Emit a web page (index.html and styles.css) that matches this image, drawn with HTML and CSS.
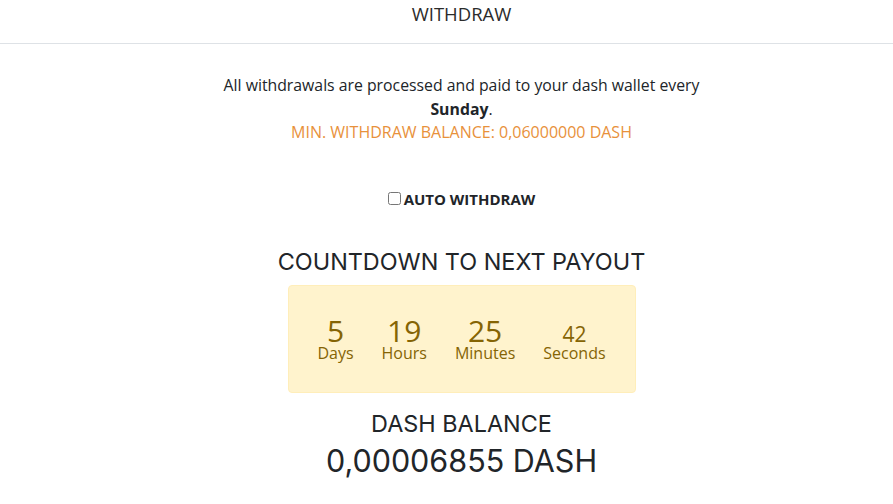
FILE: index.html
```html
<!DOCTYPE html>
<html lang="en">
<head>
<meta charset="UTF-8">
<meta name="viewport" content="width=device-width, initial-scale=1.0">
<title>Withdraw</title>
<link rel="stylesheet" href="styles.css">
</head>
<body>

<div class="cabecalho">
  <h4 class="titulo">WITHDRAW</h4>
</div>

<div id="conteudo">
  <p class="aviso">
    All withdrawals are processed and paid to your dash wallet every<br>
    <b>Sunday</b>.<br>
    <span class="minimo">MIN. WITHDRAW BALANCE: 0,06000000 DASH</span>
  </p>

  <label class="auto"><input type="checkbox" id="autoWithdraw"> AUTO WITHDRAW</label>

  <h3 class="subtitulo">COUNTDOWN TO NEXT PAYOUT</h3>

  <div class="contador">
    <div class="bloco"><span class="num">5</span><span class="rotulo">Days</span></div>
    <div class="bloco"><span class="num">19</span><span class="rotulo">Hours</span></div>
    <div class="bloco"><span class="num">25</span><span class="rotulo">Minutes</span></div>
    <div class="bloco"><span class="num pequeno">42</span><span class="rotulo">Seconds</span></div>
  </div>

  <h3 class="subtitulo saldo-titulo">DASH BALANCE</h3>
  <div class="saldo">0,00006855 DASH</div>
</div>

</body>
</html>
```

FILE: styles.css
```css
body {
  margin: 0;
  padding-left: 30px;
  background-color: white;
  font-family: "Open Sans", sans-serif;
  color: #212529;
}

.cabecalho {
  height: 43px;
  margin-left: -30px;
  padding-left: 30px;
  border-bottom: 1px solid #dee2e6;
  text-align: center;
}

.titulo {
  margin: 0;
  padding-top: 3px;
  font-size: 18.5px;
  font-weight: 400;
  line-height: 22px;
  color: #2b2b2b;
}

#conteudo {
  text-align: center;
  display: flex;
  flex-direction: column;
  align-items: center;
}

.aviso {
  margin: 30px 0 0;
  font-size: 15.8px;
  line-height: 23.5px;
}

.minimo {
  color: #e8913b;
  font-size: 16px;
}

.auto {
  margin-top: 44px;
  font-size: 15px;
  font-weight: 700;
  display: flex;
  align-items: center;
  gap: 3px;
}

.auto input {
  margin: 0;
  width: 13px;
  height: 13px;
}

.subtitulo {
  margin: 38px 0 0;
  font-family: "Inter", sans-serif;
  font-weight: 400;
  font-size: 23.4px;
  line-height: 30px;
}

.contador {
  margin-top: 8px;
  width: 346px;
  height: 106px;
  background-color: #fff3cd;
  border: 1px solid #ffeeba;
  border-radius: 4px;
  color: #856404;
  display: flex;
  justify-content: center;
  align-items: center;
  gap: 28px;
}

.bloco {
  display: flex;
  flex-direction: column;
  align-items: center;
}

.num {
  font-size: 30px;
  line-height: 30px;
}

.num.pequeno {
  font-size: 21px;
  line-height: 24px;
  margin-top: 6px;
}

.rotulo {
  font-size: 16px;
  line-height: 18px;
  margin-top: -2px;
}

.saldo-titulo {
  margin-top: 16px;
}

.saldo {
  margin-top: 2px;
  font-family: "Inter", sans-serif;
  font-size: 30.5px;
  line-height: 40px;
}
```
